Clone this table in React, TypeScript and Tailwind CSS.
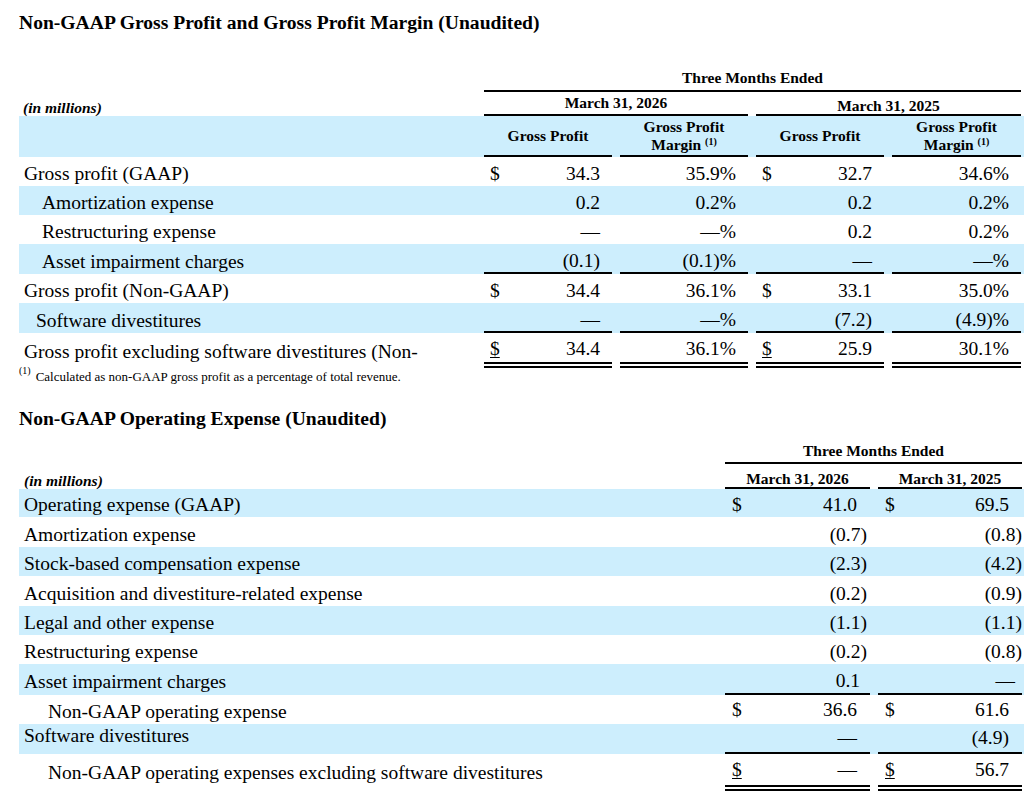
const BLUE = "bg-[#cdeefd]";

type GrossRow = {
  label: string;
  pad: string;
  blue: boolean;
  h: string;
  cells: string[];
  dollar?: boolean;
  line?: "single" | "double";
};

const grossRows: GrossRow[] = [
  { label: "Gross profit (GAAP)", pad: "pl-[5px]", blue: false, h: "h-[29px] pt-[5px]", cells: ["34.3", "35.9%", "32.7", "34.6%"], dollar: true },
  { label: "Amortization expense", pad: "pl-[23px]", blue: true, h: "h-[29px] pt-[5px]", cells: ["0.2", "0.2%", "0.2", "0.2%"] },
  { label: "Restructuring expense", pad: "pl-[23px]", blue: false, h: "h-[29px] pt-[5px]", cells: ["—", "—%", "0.2", "0.2%"] },
  { label: "Asset impairment charges", pad: "pl-[23px]", blue: true, h: "h-[30px] pt-[5px]", cells: ["(0.1)", "(0.1)%", "—", "—%"], line: "single" },
  { label: "Gross profit (Non-GAAP)", pad: "pl-[5px]", blue: false, h: "h-[29px] pt-[5px]", cells: ["34.4", "36.1%", "33.1", "35.0%"], dollar: true },
  { label: "Software divestitures", pad: "pl-[17px]", blue: true, h: "h-[30px] pt-[5px]", cells: ["—", "—%", "(7.2)", "(4.9)%"], line: "single" },
  { label: "Gross profit excluding software divestitures (Non-", pad: "pl-[5px]", blue: false, h: "h-[35px] pt-[3px]", cells: ["34.4", "36.1%", "25.9", "30.1%"], dollar: true, line: "double" },
];

type OpRow = {
  label: string;
  pad: string;
  blue: boolean;
  h: string;
  cells: { v: string; pr: string }[];
  dollar?: boolean;
  line?: "single" | "double";
};

const opRows: OpRow[] = [
  { label: "Operating expense (GAAP)", pad: "pl-[5px]", blue: true, h: "h-[28px] pt-[4px]", cells: [{ v: "41.0", pr: "pr-[13px]" }, { v: "69.5", pr: "pr-[13px]" }], dollar: true },
  { label: "Amortization expense", pad: "pl-[5px]", blue: false, h: "h-[30px] pt-[5px]", cells: [{ v: "(0.7)", pr: "pr-[3px]" }, { v: "(0.8)", pr: "pr-[0px]" }] },
  { label: "Stock-based compensation expense", pad: "pl-[5px]", blue: true, h: "h-[29px] pt-[5px]", cells: [{ v: "(2.3)", pr: "pr-[3px]" }, { v: "(4.2)", pr: "pr-[0px]" }] },
  { label: "Acquisition and divestiture-related expense", pad: "pl-[5px]", blue: false, h: "h-[30px] pt-[5px]", cells: [{ v: "(0.2)", pr: "pr-[3px]" }, { v: "(0.9)", pr: "pr-[0px]" }] },
  { label: "Legal and other expense", pad: "pl-[5px]", blue: true, h: "h-[29px] pt-[5px]", cells: [{ v: "(1.1)", pr: "pr-[3px]" }, { v: "(1.1)", pr: "pr-[0px]" }] },
  { label: "Restructuring expense", pad: "pl-[5px]", blue: false, h: "h-[29px] pt-[5px]", cells: [{ v: "(0.2)", pr: "pr-[3px]" }, { v: "(0.8)", pr: "pr-[0px]" }] },
  { label: "Asset impairment charges", pad: "pl-[5px]", blue: true, h: "h-[31px] pt-[5px]", cells: [{ v: "0.1", pr: "pr-[10px]" }, { v: "—", pr: "pr-[7px]" }], line: "single" },
  { label: "Non-GAAP operating expense", pad: "pl-[29px] pt-[4px]", blue: false, h: "h-[29px]", cells: [{ v: "36.6", pr: "pr-[13px]" }, { v: "61.6", pr: "pr-[13px]" }], dollar: true },
  { label: "Software divestitures", pad: "pl-[5px] pb-[6px]", blue: true, h: "h-[30px]", cells: [{ v: "—", pr: "pr-[13px]" }, { v: "(4.9)", pr: "pr-[13px]" }], line: "single" },
  { label: "Non-GAAP operating expenses excluding software divestitures", pad: "pl-[29px]", blue: false, h: "h-[37px]", cells: [{ v: "—", pr: "pr-[13px]" }, { v: "56.7", pr: "pr-[13px]" }], dollar: true, line: "double" },
];

const lineClass = (line?: "single" | "double") =>
  line === "single"
    ? "border-b-2 border-black"
    : line === "double"
    ? "border-b-[6px] border-double border-black"
    : "";

const GrossTable = () => (
  <div>
    {/* Period header */}
    <div className="flex h-[26px] mt-[32px]">
      <div className="w-[465px]" />
      <div className="w-[537px] border-b-2 border-black flex items-center justify-center text-[15.5px] font-bold">
        Three Months Ended
      </div>
    </div>
    <div className="flex h-[24px]">
      <div className="w-[465px] flex items-end pl-[4px] pb-[1px] text-[15.5px] font-bold italic">
        (in millions)
      </div>
      <div className="flex gap-[8px]">
        <div className="w-[264px] border-b-2 border-black flex items-center justify-center text-[15.5px] font-bold">
          March 31, 2026
        </div>
        <div className="w-[265px] border-b-2 border-black flex items-end justify-center pb-[1px] text-[15.5px] font-bold">
          March 31, 2025
        </div>
      </div>
    </div>

    {/* Column header band */}
    <div className={`flex h-[41px] ${BLUE}`}>
      <div className="w-[465px]" />
      <div className="flex gap-[8px] text-[15.5px] font-bold leading-[18px]">
        {[0, 1, 2, 3].map((i) => (
          <div
            key={i}
            className={`${i === 3 ? "w-[129px]" : "w-[128px]"} border-b-2 border-black flex items-center justify-center text-center`}
          >
            {i % 2 === 0 ? (
              "Gross Profit"
            ) : (
              <span>
                Gross Profit
                <br />
                Margin <sup className="text-[10px]">(1)</sup>
              </span>
            )}
          </div>
        ))}
      </div>
    </div>

    {grossRows.map((r) => (
      <div key={r.label} className={`flex ${r.h} ${r.blue ? BLUE : ""}`}>
        <div className={`w-[465px] flex items-center whitespace-nowrap overflow-hidden ${r.pad}`}>{r.label}</div>
        <div className="flex gap-[8px]">
          {r.cells.map((c, i) => (
            <div
              key={i}
              className={`${i === 3 ? "w-[129px]" : "w-[128px]"} flex items-center justify-between ${i % 2 === 0 ? "pl-[6px]" : ""} pr-[12px] ${lineClass(r.line)}`}
            >
              <span className={r.line === "double" ? "underline underline-offset-2" : ""}>
                {r.dollar && i % 2 === 0 ? "$" : ""}
              </span>
              <span>{c}</span>
            </div>
          ))}
        </div>
      </div>
    ))}

    <div className="h-[14px] mt-[1px] flex items-center text-[13px] leading-none">
      <sup className="text-[10px] mr-[5px]">(1)</sup>
      Calculated as non-GAAP gross profit as a percentage of total revenue.
    </div>
  </div>
);

const OpTable = () => (
  <div>
    <div className="flex h-[25px] mt-[9px]">
      <div className="w-[706px]" />
      <div className="w-[297px] border-b-2 border-black flex items-center justify-center text-[15.5px] font-bold">
        Three Months Ended
      </div>
    </div>
    <div className="flex h-[25px]">
      <div className="w-[706px] flex items-end pl-[5px] pb-[1px] text-[15.5px] font-bold italic">
        (in millions)
      </div>
      <div className="flex gap-[8px]">
        <div className="w-[145px] border-b-2 border-black flex items-end justify-center pb-[1px] text-[15.5px] font-bold">
          March 31, 2026
        </div>
        <div className="w-[144px] border-b-2 border-black flex items-end justify-center pb-[1px] text-[15.5px] font-bold">
          March 31, 2025
        </div>
      </div>
    </div>

    {opRows.map((r) => (
      <div key={r.label} className={`flex ${r.h} ${r.blue ? BLUE : ""}`}>
        <div className={`w-[706px] flex items-center whitespace-nowrap ${r.pad}`}>{r.label}</div>
        <div className="flex gap-[8px]">
          {r.cells.map((c, i) => (
            <div
              key={i}
              className={`${i === 0 ? "w-[145px]" : "w-[144px]"} flex items-center justify-between pl-[7px] ${c.pr} ${lineClass(r.line)}`}
            >
              <span className={r.line === "double" ? "underline underline-offset-2" : ""}>
                {r.dollar ? "$" : ""}
              </span>
              <span>{c.v}</span>
            </div>
          ))}
        </div>
      </div>
    ))}
  </div>
);

export default function App() {
  return (
    <div className="w-[1024px] h-[801px] bg-white text-black font-['Liberation_Serif','Times_New_Roman',serif] text-[19.5px] leading-none pl-[19px] pt-[12px] overflow-hidden">
      <h2 className="h-[22px] flex items-center text-[19.6px] font-bold">
        Non-GAAP Gross Profit and Gross Profit Margin (Unaudited)
      </h2>
      <GrossTable />
      <h2 className="h-[22px] mt-[25px] flex items-center text-[19.6px] font-bold">
        Non-GAAP Operating Expense (Unaudited)
      </h2>
      <OpTable />
    </div>
  );
}
